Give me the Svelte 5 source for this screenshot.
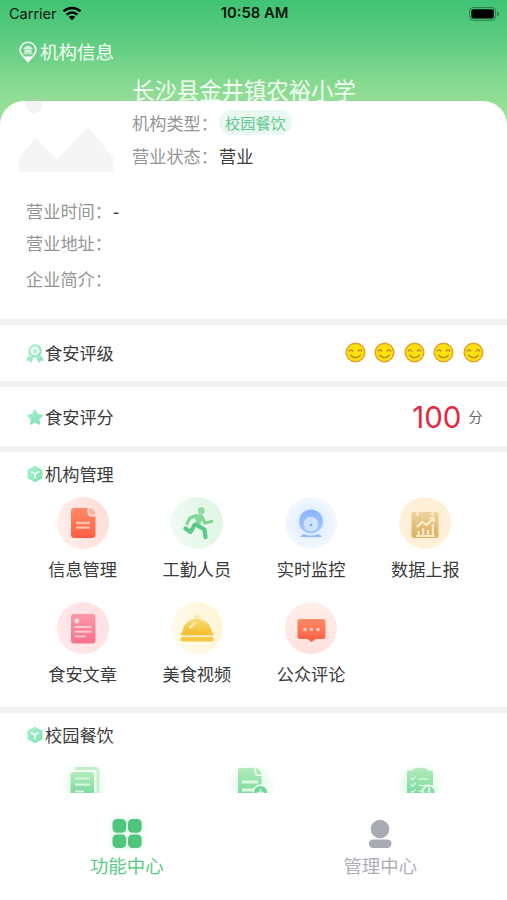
<script>
  const manage = [
    { label: '信息管理', icon: 'doc', tint: 'red' },
    { label: '工勤人员', icon: 'run', tint: 'green' },
    { label: '实时监控', icon: 'cam', tint: 'blue' },
    { label: '数据上报', icon: 'chart', tint: 'gold' },
    { label: '食安文章', icon: 'article', tint: 'pink' },
    { label: '美食视频', icon: 'food', tint: 'yellow' },
    { label: '公众评论', icon: 'chat', tint: 'coral' }
  ];
  const campus = ['copy', 'docplus', 'clip'];
</script>

{#snippet cube()}
  <svg class="sec" width="18" height="18" viewBox="0 0 18 18">
    <path d="M9 1.2 16 5v8L9 16.8 2 13V5z" fill="url(#mint)" stroke="url(#mint)" stroke-linejoin="round" />
    <path d="M5 6.500 9 9l4-2.500M9 9v4.500" fill="none" stroke="#fff" stroke-width="1.700" opacity=".85" />
  </svg>
{/snippet}

<svg class="defs" width="0" height="0">
  <defs>
    <linearGradient id="mint" x1="0" y1="0" x2="1" y2="1"><stop stop-color="#a5f3c8" /><stop offset="1" stop-color="#7fe0b7" /></linearGradient>
    <linearGradient id="gRed" x1="0" y1="0" x2="0" y2="1"><stop stop-color="#ff8b66" /><stop offset="1" stop-color="#ff5d43" /></linearGradient>
    <linearGradient id="gGreen" x1="0" y1="0" x2="0" y2="1"><stop stop-color="#93db9d" /><stop offset="1" stop-color="#4ec884" /></linearGradient>
    <linearGradient id="gBlue" x1="0" y1="0" x2="0" y2="1"><stop stop-color="#8bb5fb" /><stop offset="1" stop-color="#a5cafd" /></linearGradient>
    <linearGradient id="gGold" x1="0" y1="0" x2="0" y2="1"><stop stop-color="#efd49c" /><stop offset="1" stop-color="#d9ae61" /></linearGradient>
    <linearGradient id="gPink" x1="0" y1="0" x2="0" y2="1"><stop stop-color="#fa99a8" /><stop offset="1" stop-color="#f9708a" /></linearGradient>
    <linearGradient id="gYellow" x1="0" y1="0" x2="0" y2="1"><stop stop-color="#fbdc79" /><stop offset="1" stop-color="#f5bd2f" /></linearGradient>
    <linearGradient id="gLeaf" x1="0" y1="0" x2="0" y2="1"><stop stop-color="#b3ecbc" /><stop offset="1" stop-color="#6fd596" /></linearGradient>
  </defs>
</svg>

<div class="app">
  <main>
    <div class="hero">
      <div class="status">
        <span class="carrier">Carrier
          <svg width="20" height="15" viewBox="0 0 20 15">
            <path d="M1.600 5.400a12 12 0 0 1 16.800 0M4.600 8.600a7.700 7.700 0 0 1 10.800 0" fill="none" stroke="#000" stroke-width="2.500" />
            <path d="M6.800 11a4.600 4.600 0 0 1 6.400 0L10 14.300z" />
          </svg>
        </span>
        <span class="time">10:58 AM</span>
        <svg class="battery" width="31" height="14" viewBox="0 0 31 14">
          <rect x=".6" y=".6" width="26" height="12.600" rx="3.600" fill="none" stroke="#16502f" stroke-opacity=".65" />
          <rect x="2.300" y="2.300" width="22.600" height="9.200" rx="2" />
          <path d="M28.200 4.700q2 .5 2 2.200t-2 2.200z" fill="#1c6840" opacity=".75" />
        </svg>
      </div>
      <div class="heading">
        <svg width="18" height="22" viewBox="0 0 18 22">
          <path d="M9 1.200a7.800 7.800 0 0 1 7.800 7.800c0 3.800-3.200 6.600-5.400 9L9 20.600 6.600 18C4.400 15.600 1.200 12.800 1.200 9A7.800 7.800 0 0 1 9 1.200z" fill="none" stroke="#fff" stroke-width="1.500" />
          <path d="M4.500 15.500h9L9 20.800z" fill="#fff" />
          <path d="M9 4.200 13.500 7v1h-9V7zM5.300 8.500h7.400v3.300H5.300zM4.500 12.300h9v1h-9z" fill="#fff" opacity=".7" />
        </svg>
        <h1>机构信息</h1>
      </div>
      <h2>长沙县金井镇农裕小学</h2>
      <section class="card">
        <div class="intro">
          <svg class="photo" width="96" height="78" viewBox="0 0 96 78">
            <circle cx="16" cy="10" r="8.500" fill="#bbb" fill-opacity=".17" />
            <path d="M1 63 17 43l21 20 2 .3L70 32l25 30v13q0 2-2 2H3q-2 0-2-2z" fill="#f5f5f5" />
          </svg>
          <div class="facts">
            <p><span class="k">机构类型：</span><b class="pill">校园餐饮</b></p>
            <p><span class="k">营业状态：</span><span>营业</span></p>
          </div>
        </div>
        <p class="line a"><span class="k">营业时间：</span><span class="dash">-</span></p>
        <p class="line b"><span class="k">营业地址：</span></p>
        <p class="line c"><span class="k">企业简介：</span></p>
      </section>
    </div>

    <section class="row rating">
      <svg class="sec" width="18" height="19" viewBox="0 0 18 19">
        <path d="M2.500 11.500 0 17l3-.4L5 19l2.400-5M15.500 11.500 18 17l-3-.4-2 2.400-2.400-5" fill="url(#mint)" />
        <circle cx="9" cy="7" r="5.600" fill="#fff" stroke="url(#mint)" stroke-width="2.200" />
        <path d="m9 3.800 1 2.100 2.300.3-1.700 1.600.4 2.300-2-1.100-2 1.100.4-2.300-1.700-1.600L8 5.900z" fill="#a9f3ce" />
      </svg>
      <h3>食安评级</h3>
      <div class="faces">
        {#each Array(5) as _}
          <svg width="21" height="21" viewBox="0 0 21 21">
            <circle cx="10.500" cy="10.500" r="9.300" fill="#ffe20d" stroke="#e6a02c" stroke-width="1.500" />
            <path d="M4.300 9q1.700-2.300 3.500 0M13.200 9q1.700-2.300 3.500 0M5.600 13.200q4.900 5 9.800 0" fill="none" stroke="#b5850a" stroke-width="1.300" stroke-linecap="round" />
          </svg>
        {/each}
      </div>
    </section>

    <section class="row score">
      <svg class="sec" width="18" height="18" viewBox="0 0 18 18">
        <path d="m9 1.800 2.300 4.700 5.200.8-3.800 3.700.9 5.200L9 13.800l-4.600 2.400.9-5.200-3.800-3.700 5.200-.8z" fill="url(#mint)" stroke="url(#mint)" stroke-width="1.300" stroke-linejoin="round" />
      </svg>
      <h3>食安评分</h3>
      <div class="points"><strong>100</strong><span>分</span></div>
    </section>

    <section class="manage">
      <div class="title">{@render cube()}<h3>机构管理</h3></div>
      <div class="grid">
        {#each manage as m}
          <div class="item">
            <div class="disc {m.tint}">
              <svg width="52" height="52" viewBox="0 0 52 52">
                {#if m.icon === 'doc'}
                  <path d="M17 11h13.500v4q0 4.500 4.500 4.500h3.500V37.500q0 3.500-3.500 3.500H17.500q-3.500 0-3.500-3.500v-23Q14 11 17 11z" fill="url(#gRed)" />
                  <path d="M32 11q6.200 1 6.500 6.800h-3.200q-3.300 0-3.300-3.300z" fill="#ffb19c" />
                  <path d="M19 26h14M19 30.700h14" stroke="#ffc0ae" stroke-width="2.300" />
                {:else if m.icon === 'run'}
                  <circle cx="30.300" cy="13.800" r="3.500" fill="#93db9d" />
                  <path d="M23.500 20h6L26 28" fill="none" stroke="#87d797" stroke-width="5.500" stroke-linejoin="round" />
                  <path d="m23.500 19-4.500 2-3 5.500M31 20l3 6 6.500-1.500" fill="none" stroke="#80d495" stroke-width="3.200" stroke-linecap="round" stroke-linejoin="round" />
                  <path d="m23.500 28-4 7-5-3.500M25.500 28l8 4.500 1 7.500" fill="none" stroke="#57cb8a" stroke-width="4.300" stroke-linecap="round" stroke-linejoin="round" />
                {:else if m.icon === 'cam'}
                  <circle cx="26" cy="24.500" r="12" fill="url(#gBlue)" />
                  <circle cx="26" cy="27" r="7.300" fill="#cfe2fe" />
                  <circle cx="26" cy="28" r="1.200" fill="#78a7f4" />
                  <path d="M18.500 37q7.500 3 15 0l3 2v1h-21v-1z" fill="#8fb9fa" />
                {:else if m.icon === 'chart'}
                  <rect x="12.500" y="15" width="27" height="26" rx="3" fill="url(#gGold)" />
                  <path d="M18.500 14v5M33.500 14v5" stroke="#fdeecb" stroke-width="2.200" />
                  <path d="m18 30 5.500-5 4 3 7-6.500M30.500 21.300h4.300v4" fill="none" stroke="#fff0d2" stroke-width="1.900" />
                  <path d="M17 39h19M19.500 38v-4M24.200 38v-7M29 38v-5M33.800 38v-11" stroke="#fbe8c3" stroke-width="2.100" />
                {:else if m.icon === 'article'}
                  <rect x="14" y="12" width="24.500" height="29.500" rx="3" fill="url(#gPink)" />
                  <circle cx="19.800" cy="19" r="2.400" fill="#ffdbe1" />
                  <path d="M17.500 25h17M17.500 29.700h17M17.500 34.400h11" stroke="#ffc8d1" stroke-width="1.900" />
                {:else if m.icon === 'food'}
                  <circle cx="26" cy="16" r="3.500" fill="#fbe9b2" />
                  <path d="M11 31.500q2-14.500 15-14.500t15 14.500z" fill="url(#gYellow)" />
                  <path d="m19 25.500 5-4.500" stroke="#fde9a8" stroke-width="2.400" stroke-linecap="round" />
                  <rect x="9.500" y="31" width="33" height="2.500" rx="1" fill="#f5c23d" />
                  <rect x="9.500" y="35" width="33" height="4.500" rx="1.500" fill="#f8c842" />
                {:else}
                  <path d="M15 17h23q2.500 0 2.500 2.500v15Q40.500 37 38 37h-7.500L26.500 40l-4-3H15q-2.500 0-2.500-2.500v-15Q12.500 17 15 17z" fill="url(#gRed)" />
                  <g fill="#ffd8ca"><circle cx="20" cy="27.500" r="1.700" /><circle cx="26.500" cy="27.500" r="1.700" /><circle cx="33" cy="27.500" r="1.700" /></g>
                {/if}
              </svg>
            </div>
            <span>{m.label}</span>
          </div>
        {/each}
      </div>
    </section>

    <section class="campus">
      <div class="title">{@render cube()}<h3>校园餐饮</h3></div>
      <div class="three">
        {#each campus as c}
          <svg width="52" height="52" viewBox="0 0 52 52">
            {#if c === 'copy'}
              <path d="M17 8.500h20q3 0 3 3V34" fill="none" stroke="#c3efcb" stroke-width="2.800" />
              <rect x="12.500" y="12" width="23.500" height="28" rx="3" fill="url(#gLeaf)" />
              <path d="M17 18.500h15M17 24.700h15M17 31.500h9" stroke="#d4f6da" stroke-width="2.200" />
            {:else if c === 'docplus'}
              <path d="M15 8h14.500v4q0 4 4 4H36.500v24H13V10q0-2 2-2zM31 8q5 1 5.500 6.500h-2.500q-3 0-3-3z" fill="url(#gLeaf)" />
              <path d="M17 22h16M17 30h12" stroke="#dcf8e1" stroke-width="3" />
              <circle cx="35.500" cy="32.500" r="7.300" fill="#6dd59c" stroke="#effcf1" stroke-width="1.500" /><path d="M35.500 29v7M32 32.500h7" stroke="#d4f5dc" stroke-width="1.500" />
            {:else}
              <path d="M15 10.500h4l3-2.500h10l3 2.500h3q2 0 2 2v27H14V12.500q0-2 1-2z" fill="url(#gLeaf)" />
              <path d="m18 18 1.500 1.500 3-3M18 24.500l1.500 1.500 3-3M18 31l1.500 1.500 3-3M25.500 19h9M25.500 25.500h8M25.500 31h5" fill="none" stroke="#d4f5da" stroke-width="1.600" />
              <circle cx="36" cy="32" r="6.600" fill="#8cdeaa" stroke="#effcf1" stroke-width="1.700" /><path d="M36 27.500v4.500l3 3" fill="none" stroke="#e8fbeb" stroke-width="1.500" />
            {/if}
          </svg>
        {/each}
      </div>
    </section>
  </main>

  <nav>
    <div class="tab on">
      <svg width="36" height="36" viewBox="0 0 36 36">
        <g fill="#50c67d"><rect x="3.500" y="3" width="13.700" height="13.700" rx="4.500" /><rect x="19" y="3" width="13.700" height="13.700" rx="4.500" /><rect x="3.500" y="18.500" width="13.700" height="13.500" rx="4.500" /><rect x="19" y="18.500" width="13.700" height="13.500" rx="4.500" /></g>
      </svg>
      <span>功能中心</span>
    </div>
    <div class="tab">
      <svg width="36" height="36" viewBox="0 0 36 36" fill="#a9abb3"><circle cx="18" cy="13" r="9.300" /><rect x="6.800" y="23.500" width="22.700" height="8.500" rx="4.200" /></svg>
      <span>管理中心</span>
    </div>
  </nav>
</div>

<style>
  :global(body) { margin: 0; background: #fff; }
  .app { width: 507px; height: 900px; overflow: hidden; background: #fff; color: #3b3b3b; font: 17.2px/24px "Noto Sans CJK SC", sans-serif; }
  .app :is(h1, h2, h3, p) { margin: 0; font-weight: 400; }
  .defs { display: block; }
  svg { flex: none; display: block; }
  main { height: 793px; overflow: hidden; display: flex; flex-direction: column; }
  .hero { flex: none; height: 319px; display: flex; flex-direction: column; background: linear-gradient(#3fc374 0, #5bcb80 37px, #8fdc94 94px, #a0e39b 125px, #fff 126px); }
  .status { height: 27px; display: grid; grid-template-columns: 1fr auto 1fr; align-items: center; padding: 0 7px 0 9px; color: #06160d; font: 14.5px/27px Inter, sans-serif; }
  .carrier { display: flex; align-items: center; gap: 5px; }
  .time { font-weight: 600; font-size: 14.800px; }
  .battery { justify-self: end; }
  .heading { height: 49px; display: flex; align-items: center; gap: 3px; padding-left: 19px; color: #f4fff5; }
  .heading h1 { font-size: 18.5px; line-height: 24px; margin-top: -2px; }
  h2 { height: 25px; padding-left: 132px; color: #f4fff5; font-size: 22.400px; line-height: 27px; }
  .card { height: 218px; border-radius: 24px 24px 0 0; background: #fff; position: relative; }
  .intro { display: flex; height: 94px; padding-left: 18px; }
  .photo { margin-top: -6px; }
  .facts { margin-left: 18px; padding-top: 9px; display: flex; flex-direction: column; gap: 8px; }
  .facts p { height: 25px; display: flex; align-items: center; }
  .k { width: 87px; color: #959595; }
  .pill { height: 25px; padding: 0 6px; border-radius: 13px; background: #eaf9f0; color: #5cc892; font-weight: 400; font-size: 15.200px; line-height: 24px; }
  .line { display: flex; height: 24px; padding-left: 26px; }
  .line.a { margin-top: 4px; }
  .line.b { margin-top: 8px; }
  .line.c { margin-top: 12px; }
  .dash { font-weight: 500; }
  .row, .manage, .campus { flex: none; box-sizing: border-box; border-top: 6px solid #f2f2f2; }
  .row { display: flex; align-items: center; padding: 0 23.500px 0 26px; }
  .sec { margin-right: 1px; }
  h3 { font-size: 17.200px; line-height: 24px; color: #3b3b3b; }
  .rating { height: 62px; }
  .score { height: 65px; }
  .faces { margin-left: auto; display: flex; gap: 8.400px; margin-top: -1px; }
  .points { margin-left: auto; display: flex; align-items: center; gap: 7px; }
  .points strong { font: 400 29.500px/32px Inter, sans-serif; color: #e5293f; }
  .points span { font-size: 14px; color: #666; margin: -2px 1px 0 0; }
  .manage { height: 261px; }
  .title { display: flex; align-items: center; padding-left: 26px; height: 44px; }
  .grid { display: grid; grid-template-columns: repeat(4, 1fr); padding: 1px 24.500px 0 25.500px; row-gap: 19px; }
  .item { height: 86px; display: flex; flex-direction: column; align-items: center; gap: 8px; }
  .disc { width: 52px; height: 52px; border-radius: 50%; }
  .red { background: linear-gradient(75deg, #fff0ee, #ffdbd5); }
  .green { background: linear-gradient(75deg, #f3fcf5, #dcf5e3); }
  .blue { background: radial-gradient(circle, #e3eeff 30%, #f3f8ff 70%); }
  .gold { background: linear-gradient(75deg, #fff1da, #fef0d5); }
  .pink { background: linear-gradient(75deg, #ffe8eb, #ffdfe4); }
  .yellow { background: linear-gradient(75deg, #fffbef, #fff5d4); }
  .coral { background: linear-gradient(#ffefea, #ffe0dc); }
  .campus { height: 120px; }
  .three { display: grid; grid-template-columns: repeat(3, 1fr); justify-items: center; padding-right: 4px; margin-top: 3px; }
  .three svg { border-radius: 50%; background: radial-gradient(circle, #e6f9ea 30%, #fff 68%); }
  nav { height: 107px; display: flex; background: #fff; }
  .tab { flex: 1; display: flex; flex-direction: column; align-items: center; padding-top: 23px; color: #adafb5; font-size: 18.400px; }
  .tab span { margin-top: 1px; }
  .tab.on { color: #5bcb86; }
  .on svg { filter: drop-shadow(0 0 3px #50c67d40); }
</style>
